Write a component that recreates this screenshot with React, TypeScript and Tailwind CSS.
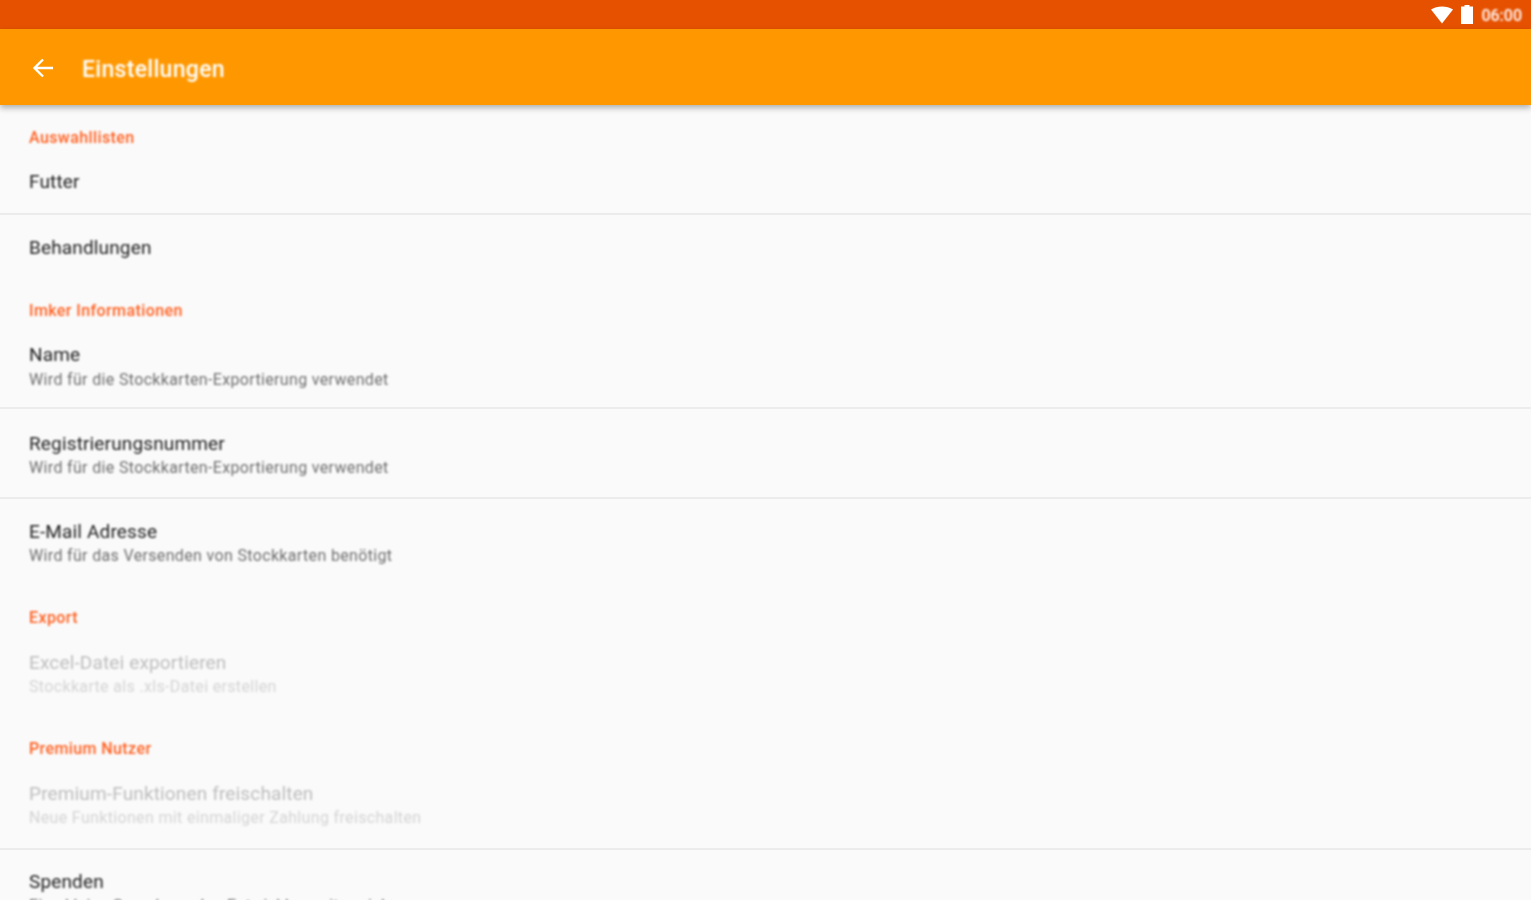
import React from "react";

function Header({ label, cls }: { label: string; cls: string }) {
  return (
    <div className={`px-[29px] ${cls}`}>
      <div className="text-[16px] leading-[22px] font-medium tracking-[0.4px] text-[#ff5f1f] blur-[0.8px]">{label}</div>
    </div>
  );
}

function Row({ title, sub, cls, subCls = "mt-[3px]", disabled }: { title: string; sub?: string; cls: string; subCls?: string; disabled?: boolean }) {
  return (
    <div className={`px-[29px] ${cls}`}>
      <div className={`text-[19px] leading-[22px] tracking-[0.15px] blur-[0.8px] ${disabled ? "text-[#bdbdbd]" : "text-[#202020]"}`}>{title}</div>
      {sub && (
        <div className={`text-[16px] leading-[20px] tracking-[0.34px] whitespace-nowrap blur-[0.8px] ${subCls} ${disabled ? "text-[#d4d4d4]" : "text-[#6e6e6e]"}`}>{sub}</div>
      )}
    </div>
  );
}

function Divider() {
  return <div className="h-[2px] bg-[#ececec]" />;
}

export default function App() {
  return (
    <div className="h-[900px] w-full overflow-hidden bg-[#fafafa] font-['Roboto',sans-serif]">
      <div className="flex h-[29px] items-center justify-end bg-[#e65100] pr-[9px] text-white">
        <svg width="24" height="18" viewBox="0 0 24 18" fill="white" className="blur-[0.6px]">
          <path d="M1 3.5C4 1.5 8 0.5 12 0.5s8 1 11 3L12 17.5z" />
        </svg>
        <svg width="14" height="19" viewBox="0 0 14 19" fill="white" className="ml-[6px] blur-[0.6px]">
          <path d="M4.5 0h5v1.5H13V19H1V1.500h3.500z" />
        </svg>
        <span className="ml-[7px] mt-[2px] text-[16px] leading-[20px] font-medium blur-[0.8px]">06:00</span>
      </div>
      <div className="relative z-10 flex h-[76px] items-center bg-[#ff9800] pl-[32px] shadow-[0_3px_6px_rgba(0,0,0,0.3)]">
        <svg width="22" height="22" viewBox="0 0 22 22" fill="none" stroke="white" strokeWidth="2.400" className="mt-[1px] blur-[0.7px]">
          <path d="M21 11H3M11 2.500L2.500 11L11 19.500" />
        </svg>
        <span className="ml-[28px] mt-[5px] text-[23px] font-medium leading-[28px] tracking-[0.3px] text-white blur-[0.8px]">Einstellungen</span>
      </div>

      <Header label="Auswahllisten" cls="pt-[22px]" />
      <Row title="Futter" cls="h-[64px] pt-[22px]" />
      <Divider />
      <Row title="Behandlungen" cls="h-[64px] pt-[22px]" />
      <Header label="Imker Informationen" cls="pt-[21px]" />
      <Row title="Name" sub="Wird für die Stockkarten-Exportierung verwendet" subCls="mt-[4px]" cls="h-[85px] pt-[22px]" />
      <Divider />
      <Row title="Registrierungsnummer" sub="Wird für die Stockkarten-Exportierung verwendet" cls="h-[88px] pt-[24px]" />
      <Divider />
      <Row title="E-Mail Adresse" sub="Wird für das Versenden von Stockkarten benötigt" cls="h-[86px] pt-[22px]" />
      <Header label="Export" cls="pt-[22px]" />
      <Row title="Excel-Datei exportieren" sub="Stockkarte als .xls-Datei erstellen" disabled cls="h-[88px] pt-[23px]" />
      <Header label="Premium Nutzer" cls="pt-[21px]" />
      <Row title="Premium-Funktionen freischalten" sub="Neue Funktionen mit einmaliger Zahlung freischalten" disabled cls="h-[88px] pt-[23px]" />
      <Divider />
      <Row title="Spenden" sub="Eine kleine Spende an den Entwickler weiterreichen" cls="pt-[21px]" />
    </div>
  );
}
